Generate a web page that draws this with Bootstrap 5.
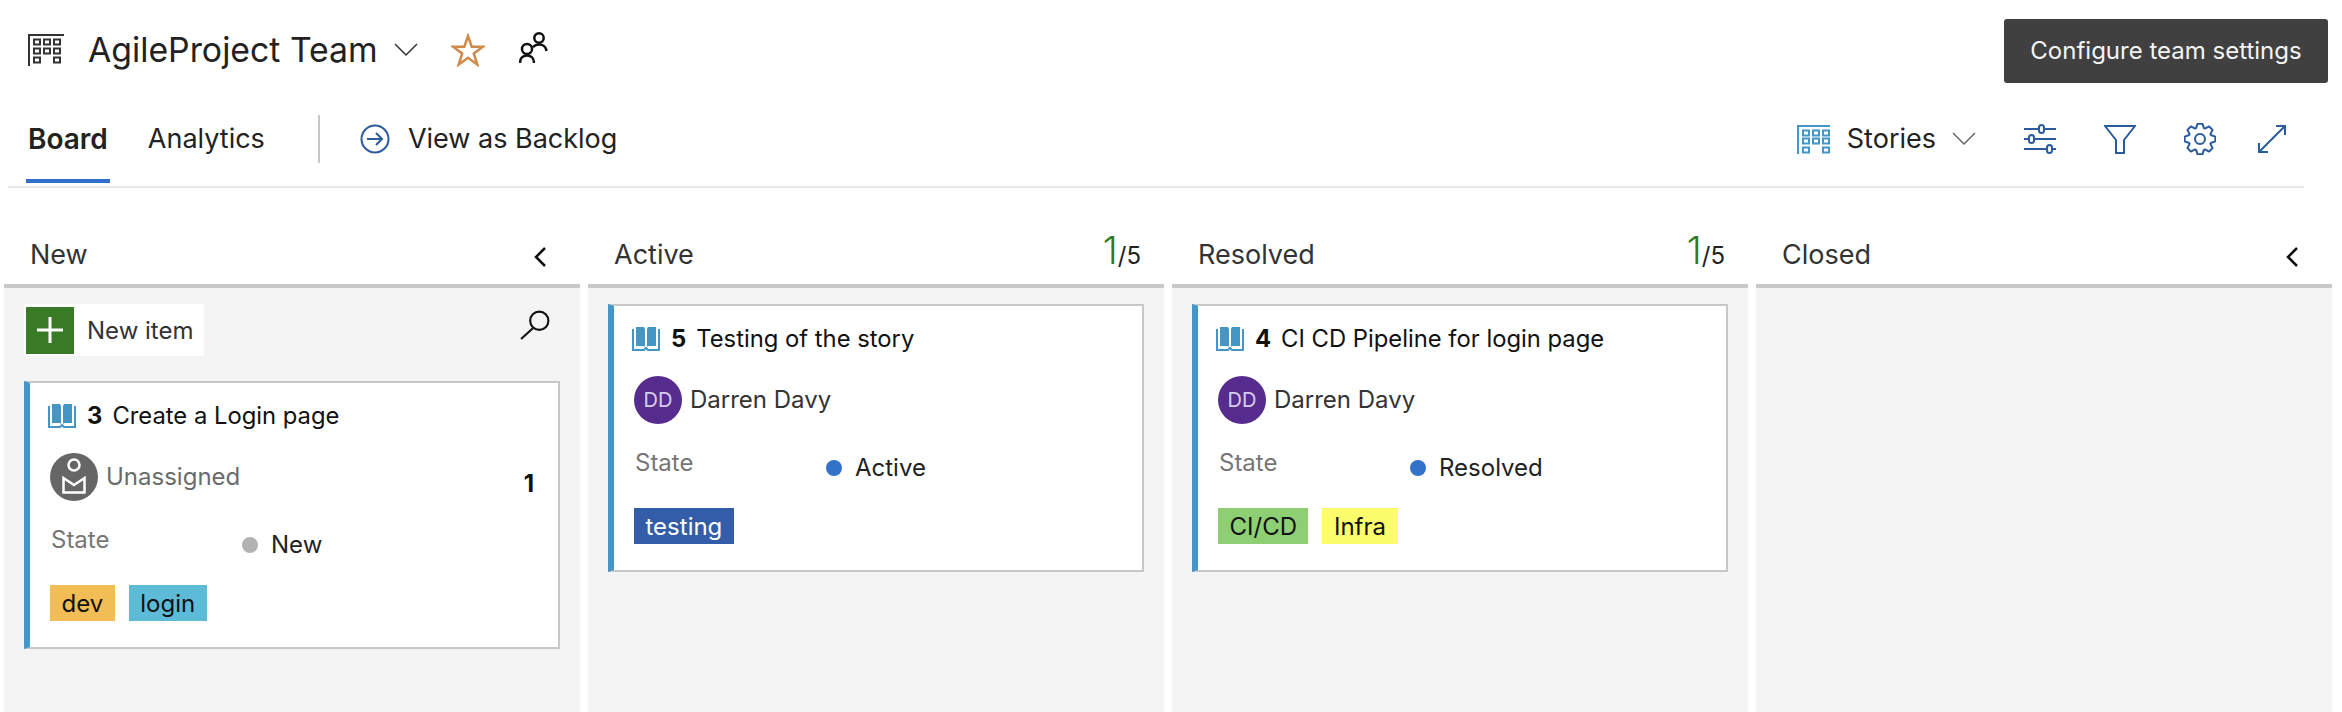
<!DOCTYPE html>
<html>

<head>
    <title>AgileProject Team</title>
    <link href="https://cdn.jsdelivr.net/npm/bootstrap@5.3.0/dist/css/bootstrap.min.css" rel="stylesheet">
    <style>
        body {
            font-family: Inter, "Liberation Sans", sans-serif;
            background-color: #fff;
            color: #222;
            height: 712px;
            overflow: hidden;
        }

        svg {
            display: block;
            flex: none;
        }

        .team-row {
            height: 100px;
            padding-left: 28px;
        }

        .team-name {
            font-size: 33.8px;
            margin-left: 24px;
            line-height: 1;
        }

        .star-icon {
            margin-left: 33px;
        }

        .people-icon {
            margin-left: 34px;
            margin-top: -4px;
        }

        .hub-tip {
            position: absolute;
            top: 19px;
            left: 2004px;
            width: 324px;
            height: 64px;
            background-color: #404040;
            color: #f4f4f4;
            border-radius: 3px;
            font-size: 24px;
        }

        .tab-row {
            height: 88px;
            margin: 0 38px 0 8px;
            padding-right: 18px;
            border-bottom: 2px solid #eaeaea;
            font-size: 27px;
            padding-bottom: 8px;
        }

        .hub-tab {
            padding: 0 2px;
            height: 80px;
            line-height: 80px;
            margin-left: 18px;
        }

        .hub-tab.is-on {
            font-size: 28px;
            font-weight: 600;
            border-bottom: 4px solid #2f6fc9;
            height: 84px;
            margin-bottom: -4px;
        }

        .hub-tab.is-second {
            margin-left: 36px;
        }

        .tab-sep {
            width: 2px;
            height: 48px;
            margin-left: 51px;
            background-color: #c8c8c8;
        }

        .backlog-icon {
            margin-left: 40px;
        }

        .backlog-text {
            margin-left: 18px;
        }

        .stories-text {
            margin-left: 17px;
        }

        .tool-icon {
            margin-left: 48px;
        }

        .tool-icon.is-last {
            margin-left: 42px;
        }

        .board {
            height: 524px;
            padding: 0 10px 0 4px;
            gap: 8px;
        }

        .lane {
            flex: 0 0 576px;
            width: 576px;
        }

        .lane-head {
            box-sizing: content-box;
            height: 45px;
            padding: 51px 26px 0 26px;
            border-bottom: 4px solid #c8c8c8;
            font-size: 27px;
            line-height: 32px;
            color: #333;
        }

        .lane-chevron {
            margin-top: 8px;
            margin-right: 8px;
        }

        .lane-count {
            color: #222;
            font-size: 24px;
            line-height: 1;
            margin-top: -8px;
            margin-right: -3px;
        }

        .lane-count b {
            font-weight: 300;
            font-size: 38px;
            color: #2f7a1f;
        }

        .lane-body {
            background-color: #f4f4f4;
            height: 424px;
            padding: 16px 20px;
        }

        .add-box {
            width: 180px;
            height: 52px;
            background-color: #fff;
            font-size: 24px;
            padding-left: 2px;
            color: #333;
        }

        .add-plus {
            width: 48px;
            height: 47px;
            background-color: #397a24;
        }

        .add-text {
            margin-left: 13px;
            padding-top: 2px;
        }

        .find-icon {
            margin: 6px 10px 0 0;
        }

        .work-card {
            width: 536px;
            height: 268px;
            background-color: #fff;
            border: 2px solid #c8c8c8;
            border-left: 6px solid #4496c6;
            padding: 19px 18px 0 18px;
        }

        .work-card.is-first {
            margin-top: 25px;
        }

        .work-title {
            font-size: 23.8px;
            height: 28px;
            color: #111;
        }

        .work-title b {
            font-weight: 700;
            margin: 0 10px 0 11px;
        }

        .who {
            height: 48px;
            margin-top: 23px;
            font-size: 24px;
            color: #333;
            padding-left: 2px;
        }

        .face {
            width: 48px;
            height: 48px;
            border-radius: 50%;
            background-color: #562c8e;
            color: #d9cfe8;
            font-size: 20px;
            margin-right: 8px;
        }

        .who-none {
            color: #6b6b6b;
        }

        .state-row {
            height: 44px;
            margin-top: 22px;
            font-size: 24px;
            padding-left: 3px;
        }

        .state-name {
            width: 191px;
            color: #767676;
            margin-top: -10px;
        }

        .state-dot {
            width: 16px;
            height: 16px;
            border-radius: 50%;
            background-color: #3273c9;
            margin-right: 13px;
        }

        .state-dot.is-new {
            background-color: #b2b2b2;
        }

        .tag-row {
            margin-top: 18px;
            gap: 14px;
            padding-left: 2px;
        }

        .tag-chip {
            height: 36px;
            line-height: 38px;
            padding: 0 11.5px;
            font-size: 24px;
            color: #111;
        }

        .tag-dev {
            background-color: #f2bd55;
        }

        .tag-login {
            background-color: #5ebbd8;
        }

        .tag-testing {
            background-color: #335da8;
            color: #fff;
        }

        .tag-cicd {
            background-color: #8fcf73;
        }

        .tag-infra {
            background-color: #fbfd6c;
        }

        .effort {
            font-weight: 700;
            color: #111;
            margin-left: auto;
            margin-right: 6px;
            padding-top: 14px;
        }
    </style>
</head>

<body>
    <div class="d-flex align-items-center team-row">
        <svg width="36" height="32" viewBox="0 0 36 32" fill="none" stroke="#333" stroke-width="2">
            <path d="M1 32V0M0 1h36" />
            <path d="M6 5.500h6v5H6zM16 5.500h6v5h-6zM26 5.500h6v5h-6zM6 14.500h6v5H6zM16 14.500h6v5h-6zM26 14.500h6v5h-6zM6 23.500h6v5H6zM26 23.500h6v5h-6z" />
        </svg>
        <div class="team-name">AgileProject Team</div>
        <svg class="ms-3" width="24" height="14" viewBox="0 0 24 14" fill="none" stroke="#333" stroke-width="1.500">
            <path d="M1 1l11 11L23 1" />
        </svg>
        <svg class="star-icon" width="34" height="34" viewBox="0 0 34 34" fill="none" stroke="#d08a4a" stroke-width="2.500">
            <path d="M17 3l3.700 10.700H32l-9.200 6.800 3.500 11L17 24.800 7.700 31.500l3.500-11L2 13.700h11.300z" />
        </svg>
        <svg class="people-icon" width="30" height="32" viewBox="0 0 30 32" fill="none" stroke="#111" stroke-width="2.500">
            <circle cx="20" cy="6" r="4.700" />
            <path d="M14 15c1.500-1.500 3.500-2.500 6-2.500 4 0 7 2.500 7.500 6.500" />
            <circle cx="8" cy="17" r="5" />
            <path d="M1 31c0-5 3-7.500 7-7.500s7 2.500 7 7.500" />
        </svg>
    </div>
    <div class="hub-tip d-flex align-items-center justify-content-center">Configure team settings</div>

    <div class="d-flex align-items-center tab-row">
        <div class="hub-tab is-on">Board</div>
        <div class="hub-tab is-second">Analytics</div>
        <div class="tab-sep"></div>
        <svg class="backlog-icon" width="30" height="30" viewBox="0 0 30 30" fill="none" stroke="#2a5b9c" stroke-width="2">
            <circle cx="15" cy="15" r="13.500" />
            <path d="M7 15h15M16 9l6 6-6 6" />
        </svg>
        <div class="backlog-text">View as Backlog</div>
        <div class="ms-auto d-flex align-items-center">
            <svg width="33" height="29" viewBox="0 0 33 29" fill="none" stroke="#4496c6" stroke-width="2">
                <path d="M1 29V0M0 1h33" />
                <path d="M6 5.500h6v5H6zM16 5.500h6v5h-6zM26 5.500h6v5h-6zM6 13.500h6v5H6zM16 13.500h6v5h-6zM26 13.500h6v5h-6zM6 22.500h6v5H6zM26 22.500h6v5h-6z" />
            </svg>
            <div class="stories-text">Stories</div>
            <svg class="ms-3" width="24" height="14" viewBox="0 0 24 14" fill="none" stroke="#666" stroke-width="1.500">
                <path d="M1 1l11 11L23 1" />
            </svg>
            <svg class="tool-icon" width="32" height="30" viewBox="0 0 32 30" fill="#fff" stroke="#2a5b9c" stroke-width="2">
                <path d="M0 5h32M0 15h32M0 25h32" />
                <rect x="15" y="1" width="5" height="8" rx="2.500" />
                <rect x="5" y="11" width="5" height="8" rx="2.500" />
                <rect x="23" y="21" width="5" height="8" rx="2.500" />
            </svg>
            <svg class="tool-icon" width="32" height="29" viewBox="0 0 32 29" fill="none" stroke="#2a5b9c" stroke-width="2">
                <path d="M1 1h30L20 15v13h-8V15z" />
            </svg>
            <svg class="tool-icon" width="32" height="32" viewBox="0 0 32 32" fill="none" stroke="#2a5b9c" stroke-width="2" stroke-linejoin="round">
                <circle cx="16" cy="16" r="5" />
                <path d="M12.070 5.190L13.580 .69H18.420L19.930 5.190L20.860 5.580L25.110 3.460L28.540 6.890L26.420 11.140L26.810 12.070L31.310 13.580V18.420L26.810 19.930L26.420 20.860L28.540 25.110L25.110 28.540L20.860 26.420L19.930 26.810L18.420 31.310H13.580L12.070 26.810L11.140 26.420L6.890 28.540L3.460 25.110L5.580 20.860L5.190 19.930L.69 18.420V13.580L5.190 12.070L5.580 11.140L3.460 6.890L6.890 3.460L11.140 5.580z" />
            </svg>
            <svg class="tool-icon is-last" width="28" height="28" viewBox="0 0 28 28" fill="none" stroke="#2a5b9c" stroke-width="2">
                <path d="M1 27L27 1M18 1h9v9M1 18v9h9" />
            </svg>
        </div>
    </div>

    <div class="d-flex board">
        <div class="lane">
            <div class="d-flex justify-content-between lane-head">
                <div>New</div>
                <svg class="lane-chevron" width="12" height="20" viewBox="0 0 12 20" fill="none" stroke="#111" stroke-width="2.500">
                    <path d="M11 1L2 10l9 9" />
                </svg>
            </div>
            <div class="lane-body">
                <div class="d-flex justify-content-between">
                    <div class="d-flex align-items-center add-box">
                        <div class="add-plus d-flex align-items-center justify-content-center">
                            <svg width="26" height="26" viewBox="0 0 26 26" stroke="#fff" stroke-width="3">
                                <path d="M13 0v26M0 13h26" />
                            </svg>
                        </div>
                        <div class="add-text">New item</div>
                    </div>
                    <svg class="find-icon" width="30" height="30" viewBox="0 0 28 28" fill="none" stroke="#111" stroke-width="2">
                        <circle cx="18" cy="10" r="8.500" />
                        <path d="M12 17L1 27" />
                    </svg>
                </div>
                <div class="work-card is-first">
                    <div class="d-flex align-items-center work-title">
                        <svg width="28" height="24" viewBox="0 0 28 24">
                            <path fill="#4496c6" d="M4 0h8l1 2v18l-1-1H4zM24 0h-8l-1 2v18l1-1h8z" />
                            <path fill="none" stroke="#4496c6" stroke-width="2" d="M1 2v21h11l2-2 2 2h11V2" />
                        </svg>
                        <b>3</b>Create a Login page
                    </div>
                    <div class="d-flex align-items-center who">
                        <svg class="me-2" width="48" height="48" viewBox="0 0 48 48">
                            <circle cx="24" cy="24" r="24" fill="#666" />
                            <circle cx="24" cy="12" r="5.500" fill="none" stroke="#fff" stroke-width="2.500" />
                            <path fill="none" stroke="#fff" stroke-width="2.500" d="M13.500 25v14.500h21V25L24 32z" />
                        </svg>
                        <span class="who-none">Unassigned</span>
                        <span class="effort">1</span>
                    </div>
                    <div class="d-flex align-items-center state-row">
                        <div class="state-name">State</div>
                        <div class="state-dot is-new"></div>
                        <div>New</div>
                    </div>
                    <div class="d-flex tag-row">
                        <div class="tag-chip tag-dev">dev</div>
                        <div class="tag-chip tag-login">login</div>
                    </div>
                </div>
            </div>
        </div>

        <div class="lane">
            <div class="d-flex justify-content-between lane-head">
                <div>Active</div>
                <div class="lane-count"><b>1</b>/5</div>
            </div>
            <div class="lane-body">
                <div class="work-card">
                    <div class="d-flex align-items-center work-title">
                        <svg width="28" height="24" viewBox="0 0 28 24">
                            <path fill="#4496c6" d="M4 0h8l1 2v18l-1-1H4zM24 0h-8l-1 2v18l1-1h8z" />
                            <path fill="none" stroke="#4496c6" stroke-width="2" d="M1 2v21h11l2-2 2 2h11V2" />
                        </svg>
                        <b>5</b>Testing of the story
                    </div>
                    <div class="d-flex align-items-center who">
                        <div class="face d-flex align-items-center justify-content-center">DD</div>
                        <span>Darren Davy</span>
                    </div>
                    <div class="d-flex align-items-center state-row">
                        <div class="state-name">State</div>
                        <div class="state-dot"></div>
                        <div>Active</div>
                    </div>
                    <div class="d-flex tag-row">
                        <div class="tag-chip tag-testing">testing</div>
                    </div>
                </div>
            </div>
        </div>

        <div class="lane">
            <div class="d-flex justify-content-between lane-head">
                <div>Resolved</div>
                <div class="lane-count"><b>1</b>/5</div>
            </div>
            <div class="lane-body">
                <div class="work-card">
                    <div class="d-flex align-items-center work-title">
                        <svg width="28" height="24" viewBox="0 0 28 24">
                            <path fill="#4496c6" d="M4 0h8l1 2v18l-1-1H4zM24 0h-8l-1 2v18l1-1h8z" />
                            <path fill="none" stroke="#4496c6" stroke-width="2" d="M1 2v21h11l2-2 2 2h11V2" />
                        </svg>
                        <b>4</b>CI CD Pipeline for login page
                    </div>
                    <div class="d-flex align-items-center who">
                        <div class="face d-flex align-items-center justify-content-center">DD</div>
                        <span>Darren Davy</span>
                    </div>
                    <div class="d-flex align-items-center state-row">
                        <div class="state-name">State</div>
                        <div class="state-dot"></div>
                        <div>Resolved</div>
                    </div>
                    <div class="d-flex tag-row">
                        <div class="tag-chip tag-cicd">CI/CD</div>
                        <div class="tag-chip tag-infra">Infra</div>
                    </div>
                </div>
            </div>
        </div>

        <div class="lane">
            <div class="d-flex justify-content-between lane-head">
                <div>Closed</div>
                <svg class="lane-chevron" width="12" height="20" viewBox="0 0 12 20" fill="none" stroke="#111" stroke-width="2.500">
                    <path d="M11 1L2 10l9 9" />
                </svg>
            </div>
            <div class="lane-body"></div>
        </div>
    </div>

    <script src="https://cdn.jsdelivr.net/npm/bootstrap@5.3.0/dist/js/bootstrap.bundle.min.js"></script>
</body>

</html>
